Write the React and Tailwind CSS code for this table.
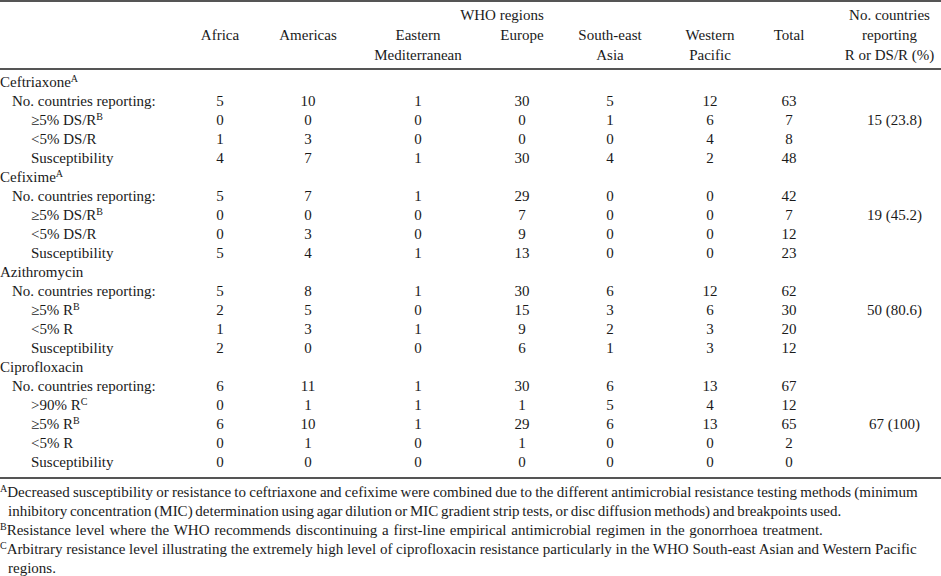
const groups = [
  {
    name: "Ceftriaxone",
    sup: "A",
    rows: [
      { label: "No. countries reporting:", level: 1, values: ["5", "10", "1", "30", "5", "12", "63"] },
      { label: "≥5% DS/R", sup: "B", level: 2, values: ["0", "0", "0", "0", "1", "6", "7"], extra: "15 (23.8)" },
      { label: "<5% DS/R", level: 2, values: ["1", "3", "0", "0", "0", "4", "8"] },
      { label: "Susceptibility", level: 2, values: ["4", "7", "1", "30", "4", "2", "48"] },
    ],
  },
  {
    name: "Cefixime",
    sup: "A",
    rows: [
      { label: "No. countries reporting:", level: 1, values: ["5", "7", "1", "29", "0", "0", "42"] },
      { label: "≥5% DS/R", sup: "B", level: 2, values: ["0", "0", "0", "7", "0", "0", "7"], extra: "19 (45.2)" },
      { label: "<5% DS/R", level: 2, values: ["0", "3", "0", "9", "0", "0", "12"] },
      { label: "Susceptibility", level: 2, values: ["5", "4", "1", "13", "0", "0", "23"] },
    ],
  },
  {
    name: "Azithromycin",
    rows: [
      { label: "No. countries reporting:", level: 1, values: ["5", "8", "1", "30", "6", "12", "62"] },
      { label: "≥5% R", sup: "B", level: 2, values: ["2", "5", "0", "15", "3", "6", "30"], extra: "50 (80.6)" },
      { label: "<5% R", level: 2, values: ["1", "3", "1", "9", "2", "3", "20"] },
      { label: "Susceptibility", level: 2, values: ["2", "0", "0", "6", "1", "3", "12"] },
    ],
  },
  {
    name: "Ciprofloxacin",
    rows: [
      { label: "No. countries reporting:", level: 1, values: ["6", "11", "1", "30", "6", "13", "67"] },
      { label: ">90% R", sup: "C", level: 2, values: ["0", "1", "1", "1", "5", "4", "12"] },
      { label: "≥5% R", sup: "B", level: 2, values: ["6", "10", "1", "29", "6", "13", "65"], extra: "67 (100)" },
      { label: "<5% R", level: 2, values: ["0", "1", "0", "1", "0", "0", "2"] },
      { label: "Susceptibility", level: 2, values: ["0", "0", "0", "0", "0", "0", "0"] },
    ],
  },
];

const Cols = () => (
  <colgroup>
    <col className="w-[176px]" />
    <col className="w-[88px]" />
    <col className="w-[88px]" />
    <col className="w-[132px]" />
    <col className="w-[76px]" />
    <col className="w-[100px]" />
    <col className="w-[100px]" />
    <col className="w-[78px]" />
    <col className="w-[103px]" />
  </colgroup>
);

const Sup = ({ children }) => <sup className="text-[10px]">{children}</sup>;

export default function App() {
  return (
    <div className="w-[941px] h-[576px] overflow-hidden bg-white text-[#1a1a1a] text-[15px] font-['Liberation_Serif',serif]">
      <div className="border-t-2 border-b-2 border-[#555] pt-[3px] pb-[3px]">
        <table className="w-full table-fixed border-collapse leading-[20px]">
          <Cols />
          <tbody>
            <tr>
              <td rowSpan={2} />
              <td colSpan={7} className="text-center pr-[10px]">WHO regions</td>
              <td rowSpan={2} className="text-center align-top whitespace-nowrap">
                No. countries<br />reporting<br />R or DS/R (%)
              </td>
            </tr>
            <tr className="align-top text-center">
              <td>Africa</td>
              <td>Americas</td>
              <td>Eastern<br />Mediterranean</td>
              <td>Europe</td>
              <td>South-east<br />Asia</td>
              <td>Western<br />Pacific</td>
              <td className="pr-[20px]">Total</td>
            </tr>
          </tbody>
        </table>
      </div>

      <div className="border-b-2 border-[#555] pt-[3px] pb-[5px]">
        <table className="w-full table-fixed border-collapse leading-[19px]">
          <Cols />
          <tbody>
            {groups.map((g) => [
              <tr key={g.name} className="h-[19px]">
                <td colSpan={9} className="whitespace-nowrap">
                  {g.name}
                  {g.sup && <Sup>{g.sup}</Sup>}
                </td>
              </tr>,
              ...g.rows.map((r, i) => (
                <tr key={g.name + i} className="h-[19px]">
                  <td className={"whitespace-nowrap " + (r.level === 1 ? "pl-[12px]" : "pl-[31px]")}>
                    {r.label}
                    {r.sup && <Sup>{r.sup}</Sup>}
                  </td>
                  {r.values.map((v, j) => (
                    <td key={j} className={"text-center " + (j === 6 ? "pr-[20px]" : "")}>
                      {v}
                    </td>
                  ))}
                  <td className="text-center pl-[10px] whitespace-nowrap">{r.extra || ""}</td>
                </tr>
              )),
            ])}
          </tbody>
        </table>
      </div>

      {/* footnotes */}
      <div className="pt-[4px] leading-[19px] whitespace-nowrap">
        <p className="pl-2 -indent-2">
          <span className="[word-spacing:-0.5px]">
            <Sup>A</Sup>Decreased susceptibility or resistance to ceftriaxone and cefixime were combined due to the different antimicrobial resistance testing methods (minimum
          </span>
          <br />
          <span className="[word-spacing:-1px]">
            inhibitory concentration (MIC) determination using agar dilution or MIC gradient strip tests, or disc diffusion methods) and breakpoints used.
          </span>
        </p>
        <p className="pl-2 -indent-2 [word-spacing:1px]">
          <Sup>B</Sup>Resistance level where the WHO recommends discontinuing a first-line empirical antimicrobial regimen in the gonorrhoea treatment.
        </p>
        <p className="pl-2 -indent-2">
          <Sup>C</Sup>Arbitrary resistance level illustrating the extremely high level of ciprofloxacin resistance particularly in the WHO South-east Asian and Western Pacific
          <br />
          regions.
        </p>
      </div>
    </div>
  );
}
